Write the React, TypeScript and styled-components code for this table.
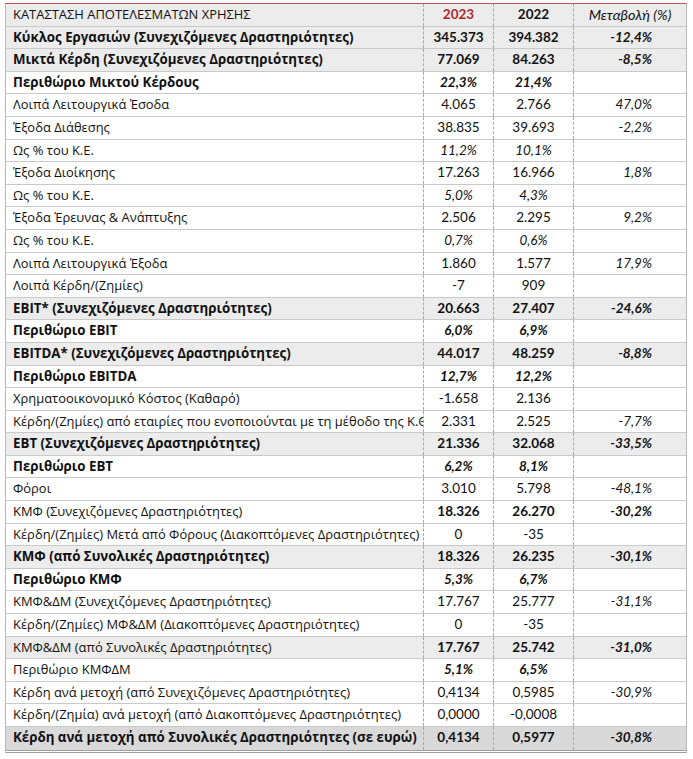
import React from "react";
import styled, { createGlobalStyle } from "styled-components";

const Global = createGlobalStyle`
  html, body { margin: 0; padding: 0; background: #ffffff; }
  body { font-family: "Open Sans", "Noto Sans", sans-serif; color: #111; }
`;

const Page = styled.div`
  padding: 3px 6px 0 5px;
`;

const Sheet = styled.div`
  width: 682px;
  border-top: 1px solid #c0504d;
  border-left: 1px solid #b8b8b8;
  border-right: 1px solid #b8b8b8;
  border-bottom: 3px double #a0a0a0;
  box-sizing: border-box;
`;

type RowKind = "head" | "shade" | "dark" | "plain";

const Row = styled.div<{ $kind: RowKind }>`
  display: grid;
  grid-template-columns: 417px 70px 80px 1fr;
  height: 22.6px;
  box-sizing: border-box;
  border-bottom: ${(p) => (p.$kind === "dark" ? "none" : "1px solid #c9c9c9")};
  background: ${(p) =>
    p.$kind === "head" || p.$kind === "shade"
      ? "#ececec"
      : p.$kind === "dark"
      ? "#d9d9d9"
      : "#ffffff"};
  line-height: 21px;
`;

const Label = styled.div<{ $bold?: boolean }>`
  padding-left: 7px;
  white-space: nowrap;
  overflow: hidden;
  font-size: ${(p) => (p.$bold ? "13.3px" : "12.95px")};
  font-weight: ${(p) => (p.$bold ? 700 : 400)};
`;

const Value = styled.div<{ $bold?: boolean; $italic?: boolean; $red?: boolean }>`
  border-left: 1px dashed #a8a8a8;
  text-align: center;
  white-space: nowrap;
  font-family: "Lato", "Open Sans", sans-serif;
  font-size: 13.5px;
  font-weight: ${(p) => (p.$bold ? 700 : 400)};
  font-style: ${(p) => (p.$italic ? "italic" : "normal")};
  color: ${(p) => (p.$red ? "#b22a2a" : "#111")};
`;

const Change = styled.div<{ $bold?: boolean; $head?: boolean }>`
  border-left: 1px dashed #a8a8a8;
  white-space: nowrap;
  font-family: "Lato", "Open Sans", sans-serif;
  font-size: ${(p) => (p.$head ? "14.3px" : "13.5px")};
  font-style: italic;
  font-weight: ${(p) => (p.$bold ? 700 : 400)};
  text-align: ${(p) => (p.$head ? "center" : "right")};
  padding-right: ${(p) => (p.$head ? "0" : "34px")};
`;

type Line = {
  label: string;
  a: string;
  b: string;
  c?: string;
  kind?: RowKind;
  boldLabel?: boolean;
  boldVals?: boolean;
  pct?: boolean;
};

const rows: Line[] = [
  { label: "Κύκλος Εργασιών (Συνεχιζόμενες Δραστηριότητες)", a: "345.373", b: "394.382", c: "-12,4%", kind: "shade", boldLabel: true, boldVals: true },
  { label: "Μικτά Κέρδη (Συνεχιζόμενες Δραστηριότητες)", a: "77.069", b: "84.263", c: "-8,5%", kind: "shade", boldLabel: true, boldVals: true },
  { label: "Περιθώριο Μικτού Κέρδους", a: "22,3%", b: "21,4%", boldLabel: true, boldVals: true, pct: true },
  { label: "Λοιπά Λειτουργικά Έσοδα", a: "4.065", b: "2.766", c: "47,0%" },
  { label: "Έξοδα Διάθεσης", a: "38.835", b: "39.693", c: "-2,2%" },
  { label: "Ως % του Κ.Ε.", a: "11,2%", b: "10,1%", pct: true },
  { label: "Έξοδα Διοίκησης", a: "17.263", b: "16.966", c: "1,8%" },
  { label: "Ως % του Κ.Ε.", a: "5,0%", b: "4,3%", pct: true },
  { label: "Έξοδα Έρευνας & Ανάπτυξης", a: "2.506", b: "2.295", c: "9,2%" },
  { label: "Ως % του Κ.Ε.", a: "0,7%", b: "0,6%", pct: true },
  { label: "Λοιπά Λειτουργικά Έξοδα", a: "1.860", b: "1.577", c: "17,9%" },
  { label: "Λοιπά Κέρδη/(Ζημίες)", a: "-7", b: "909" },
  { label: "EBIT* (Συνεχιζόμενες Δραστηριότητες)", a: "20.663", b: "27.407", c: "-24,6%", kind: "shade", boldLabel: true, boldVals: true },
  { label: "Περιθώριο EBIT", a: "6,0%", b: "6,9%", boldLabel: true, boldVals: true, pct: true },
  { label: "EBITDA* (Συνεχιζόμενες Δραστηριότητες)", a: "44.017", b: "48.259", c: "-8,8%", kind: "shade", boldLabel: true, boldVals: true },
  { label: "Περιθώριο EBITDA", a: "12,7%", b: "12,2%", boldLabel: true, boldVals: true, pct: true },
  { label: "Χρηματοοικονομικό Κόστος (Καθαρό)", a: "-1.658", b: "2.136" },
  { label: "Κέρδη/(Ζημίες) από εταιρίες που ενοποιούνται με τη μέθοδο της Κ.Θ", a: "2.331", b: "2.525", c: "-7,7%" },
  { label: "EBT (Συνεχιζόμενες Δραστηριότητες)", a: "21.336", b: "32.068", c: "-33,5%", kind: "shade", boldLabel: true, boldVals: true },
  { label: "Περιθώριο EBT", a: "6,2%", b: "8,1%", boldLabel: true, boldVals: true, pct: true },
  { label: "Φόροι", a: "3.010", b: "5.798", c: "-48,1%" },
  { label: "ΚΜΦ (Συνεχιζόμενες Δραστηριότητες)", a: "18.326", b: "26.270", c: "-30,2%", boldVals: true },
  { label: "Κέρδη/(Ζημίες) Μετά από Φόρους (Διακοπτόμενες Δραστηριότητες)", a: "0", b: "-35" },
  { label: "ΚΜΦ (από Συνολικές Δραστηριότητες)", a: "18.326", b: "26.235", c: "-30,1%", kind: "shade", boldLabel: true, boldVals: true },
  { label: "Περιθώριο ΚΜΦ", a: "5,3%", b: "6,7%", boldLabel: true, boldVals: true, pct: true },
  { label: "ΚΜΦ&ΔΜ (Συνεχιζόμενες Δραστηριότητες)", a: "17.767", b: "25.777", c: "-31,1%" },
  { label: "Κέρδη/(Ζημίες) ΜΦ&ΔΜ (Διακοπτόμενες Δραστηριότητες)", a: "0", b: "-35" },
  { label: "ΚΜΦ&ΔΜ (από Συνολικές Δραστηριότητες)", a: "17.767", b: "25.742", c: "-31,0%", kind: "shade", boldVals: true },
  { label: "Περιθώριο ΚΜΦΔΜ", a: "5,1%", b: "6,5%", boldVals: true, pct: true },
  { label: "Κέρδη ανά μετοχή (από Συνεχιζόμενες Δραστηριότητες)", a: "0,4134", b: "0,5985", c: "-30,9%" },
  { label: "Κέρδη/(Ζημία) ανά μετοχή (από Διακοπτόμενες Δραστηριότητες)", a: "0,0000", b: "-0,0008" },
  { label: "Κέρδη ανά μετοχή από Συνολικές Δραστηριότητες (σε ευρώ)", a: "0,4134", b: "0,5977", c: "-30,8%", kind: "dark", boldLabel: true, boldVals: true },
];

export default function App() {
  return (
    <Page>
      <Global />
      <Sheet>
        <Row $kind="head">
          <Label>ΚΑΤΑΣΤΑΣΗ ΑΠΟΤΕΛΕΣΜΑΤΩΝ ΧΡΗΣΗΣ</Label>
          <Value $bold $red>2023</Value>
          <Value $bold>2022</Value>
          <Change $head>Μεταβολή (%)</Change>
        </Row>
        {rows.map((r, i) => (
          <Row key={i} $kind={r.kind ?? "plain"}>
            <Label $bold={r.boldLabel}>{r.label}</Label>
            <Value $bold={r.boldVals} $italic={r.pct}>{r.a}</Value>
            <Value $bold={r.boldVals} $italic={r.pct}>{r.b}</Value>
            <Change $bold={r.boldVals}>{r.c ?? ""}</Change>
          </Row>
        ))}
      </Sheet>
    </Page>
  );
}
